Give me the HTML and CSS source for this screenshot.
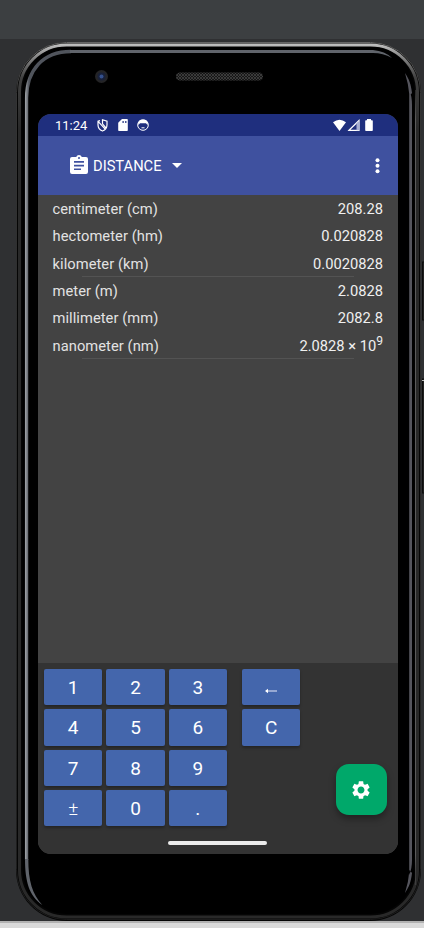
FILE: index.html
```html
<!DOCTYPE html>
<html lang="en">
<head>
<meta charset="utf-8">
<title>Unit converter</title>
<link rel="stylesheet" href="styles.css">
</head>
<body>
<div class="desktop">
  <div class="topbar"></div>
  <div class="bottombar"></div>
  <svg class="frame" width="424" height="928" viewBox="0 0 424 928" fill="none">
    <defs>
      <linearGradient id="edge" x1="0" y1="42" x2="0" y2="921" gradientUnits="userSpaceOnUse">
        <stop offset="0" stop-color="#666"/><stop offset=".06" stop-color="#343434"/><stop offset="1" stop-color="#1c1c1c"/>
      </linearGradient>
      <linearGradient id="shine" x1="0" y1="43" x2="0" y2="130" gradientUnits="userSpaceOnUse">
        <stop offset="0" stop-color="#c4c4c4"/><stop offset=".15" stop-color="#8a8a8a"/><stop offset=".4" stop-color="#404040"/><stop offset="1" stop-color="#292929"/>
      </linearGradient>
      <linearGradient id="rim" x1="25" y1="0" x2="29" y2="0" gradientUnits="userSpaceOnUse">
        <stop offset="0" stop-color="#a2a6aa"/><stop offset="1" stop-color="#50545c"/>
      </linearGradient>
      <linearGradient id="side" x1="0" y1="70" x2="0" y2="905" gradientUnits="userSpaceOnUse">
        <stop offset="0" stop-color="#555" stop-opacity="0"/><stop offset=".06" stop-color="#5c5c5c"/><stop offset=".94" stop-color="#5c5c5c"/><stop offset="1" stop-color="#555" stop-opacity="0"/>
      </linearGradient>
      <pattern id="mesh" width="3" height="3" patternUnits="userSpaceOnUse">
        <rect width="3" height="3" fill="#171717"/><path d="M0 0l3 3M3 0L0 3" stroke="#484848" stroke-width=".7"/>
      </pattern>
    </defs>
    <rect x="422.500" y="262" width="4" height="58" fill="#202020" stroke="#0c0c0c"/>
    <rect x="422.500" y="379" width="4" height="114" fill="#202020" stroke="#0c0c0c"/>
    <path d="M422 380.500h2" stroke="#bbb"/>
    <rect x="16" y="42" width="405" height="879" rx="51" fill="#050505"/>
    <rect x="16.500" y="42.500" width="404" height="877" rx="50" stroke="url(#edge)"/>
    <rect x="19.500" y="45" width="398" height="872" rx="47" stroke="url(#shine)" stroke-width="3"/>
    <rect x="22.500" y="47" width="392" height="867" rx="44" fill="#000"/>
    <path d="M415.500 90v795" stroke="url(#side)"/>
    <path d="M26.600 860V98C26.600 70 43 51.500 71 51.500" stroke="url(#rim)" stroke-width="3.300"/>
    <path d="M70 50h303q12 1 19 8-9-5-19-5H70z" fill="#60646b"/>
    <path d="M25 859h3.300c0 22 4 35 14 46C29 896 25 881 25 859z" fill="#60646b"/>
    <path d="M409.200 90q2.800 6 2.800 15v755q0 9-2.800 15zM405 73c4 6 6 11 7 20l-2.500 3q-1-12-4.500-23zM405 893c4-6 6-11 7-20l-2.500-3q-1 12-4.500 23z" fill="#55555d"/>
    <circle cx="101.500" cy="76.500" r="6.500" fill="#242426"/>
    <circle cx="101.500" cy="76.500" r="4" fill="#182039"/>
    <circle cx="101.500" cy="76.500" r="2" fill="#34508c"/>
    <rect x="176" y="72.500" width="87" height="8" rx="4" fill="url(#mesh)"/>
  </svg>

  <main class="screen">
    <header class="status">
      <span class="time">11:24</span>
      <svg class="s-icon shield" width="11" height="13" viewBox="0 0 11 13" fill="none" stroke="#fff" stroke-width="1.200"><path d="M3 1.600L1 2.300v3.500C1 8.500 2.800 11 5.500 12 8.200 11 10 8.500 10 5.800V2.300L5.500.8v4L9 9M1.500 2.800l6.500 7"/></svg>
      <svg class="s-icon card" width="10" height="12" viewBox="0 0 10 12"><path fill="#fff" fill-rule="evenodd" d="M4 0H9q.8 0 .8.800v10.400q0 .8-.8.800H1q-.8 0-.8-.800V3.800zM4.500 2v2h1.200V2zm2.700 0v2h1.200V2z"/></svg>
      <svg class="s-icon face" width="12" height="12" viewBox="0 0 12 12" fill="none" stroke="#fff"><circle cx="6" cy="6" r="5.300"/><path fill="#fff" stroke="none" d="M1 3.500L1.500 6 3 4.200h6L10.500 6 11 3.500 9 1H3z"/><path d="M4.500 8.800h3"/></svg>
      <svg class="s-icon radio" width="40" height="13" viewBox="0 0 40 13"><path fill="#fff" d="M0 3.300Q6.500-2 13 3.300L6.500 12zM33 1.200h1V0h4v1.200h1q.8 0 .8.700v9.400q0 .7-.8.700h-6q-.8 0-.8-.7V1.900q0-.7.800-.7z"/><path d="M16 11.300L26 1.500v9.800z" fill="none" stroke="#fff" stroke-width="1.200"/><path d="M23.500 4.500v6.800H26V2z" fill="#a8b0d2"/></svg>
    </header>
    <nav class="toolbar">
      <svg width="18" height="20" viewBox="0 0 18 20"><path fill="#fff" fill-rule="evenodd" d="M16 2h-4.200a3 3 0 0 0-5.600 0H2a2 2 0 0 0-2 2v13a2 2 0 0 0 2 2h14a2 2 0 0 0 2-2V4a2 2 0 0 0-2-2zM9 2a1 1 0 1 1 0 2 1 1 0 0 1 0-2zM4 6h10v1.700H4zm0 3.700h10v1.700H4zm0 3.700h7v1.700H4z"/></svg>
      <span class="title">DISTANCE</span>
      <svg class="caret" width="10" height="5" viewBox="0 0 10 5"><path fill="#fff" d="M0 0h10L5 5z"/></svg>
      <svg class="more" width="5" height="16" viewBox="0 0 5 16" fill="#fff"><circle cx="2.500" cy="2.200" r="2"/><circle cx="2.500" cy="7.700" r="2"/><circle cx="2.500" cy="13.200" r="2"/></svg>
    </nav>
    <section class="list">
      <div class="row"><span class="unit">centimeter (cm)</span><span class="value">208.28</span></div>
      <div class="row"><span class="unit">hectometer (hm)</span><span class="value">0.020828</span></div>
      <div class="row ruled"><span class="unit">kilometer (km)</span><span class="value">0.0020828</span></div>
      <div class="row"><span class="unit">meter (m)</span><span class="value">2.0828</span></div>
      <div class="row"><span class="unit">millimeter (mm)</span><span class="value">2082.8</span></div>
      <div class="row ruled"><span class="unit">nanometer (nm)</span><span class="value">2.0828 × 10<sup>9</sup></span></div>
    </section>
    <section class="keypad">
      <div class="keys digits">
        <button>1</button><button>2</button><button>3</button>
        <button>4</button><button>5</button><button>6</button>
        <button>7</button><button>8</button><button>9</button>
        <button class="sign">±</button><button>0</button><button>.</button>
      </div>
      <div class="keys edit">
        <button aria-label="Backspace"><svg width="12" height="6" viewBox="0 0 12 6"><path d="M1 3h11" stroke="#c4cde6" stroke-width="1.300"/><path d="M0 3l3-2.300v4.600z" fill="#fff"/></svg></button>
        <button>C</button>
      </div>
      <button class="fab" aria-label="Settings"><svg width="22" height="22" viewBox="0 0 24 24"><path fill="#fff" d="M19.140 12.940c.040-.300.060-.610.060-.940 0-.320-.020-.640-.070-.940l2.030-1.580c.180-.140.230-.410.120-.610l-1.920-3.320c-.120-.220-.370-.290-.590-.220l-2.390.960c-.500-.380-1.030-.700-1.620-.940l-.360-2.540c-.040-.240-.240-.410-.480-.410h-3.840c-.240 0-.430.170-.470.410l-.360 2.540c-.590.240-1.130.570-1.620.940l-2.390-.960c-.220-.080-.470 0-.590.220L2.740 8.870c-.120.210-.080.470.120.610l2.030 1.580c-.050.300-.090.630-.090.940s.020.640.070.940l-2.030 1.580c-.180.140-.230.410-.120.610l1.920 3.320c.120.220.370.290.590.220l2.390-.960c.500.380 1.030.700 1.620.940l.360 2.540c.050.240.240.410.480.410h3.840c.240 0 .440-.170.470-.410l.360-2.540c.590-.240 1.130-.560 1.620-.940l2.390.960c.220.080.470 0 .590-.220l1.920-3.320c.120-.220.070-.470-.120-.610l-2.010-1.580zM12 15.800c-2.090 0-3.800-1.710-3.800-3.800s1.710-3.800 3.800-3.800 3.800 1.710 3.800 3.800-1.710 3.800-3.800 3.800z"/></svg></button>
      <div class="home"></div>
    </section>
  </main>
</div>
</body>
</html>
```
FILE: styles.css
```css
* { box-sizing: border-box; }
body { margin: 0; font-family: Roboto, sans-serif; color: #fff; }
.desktop { position: relative; display: flex; flex-direction: column; justify-content: space-between; width: 424px; height: 928px; background: #2f3032; overflow: hidden; }
.topbar { height: 39px; background: #3c3f41; }
.bottombar { height: 7px; background: #dadada; border-top: 2px solid #b2b2b2; }
.frame { position: absolute; inset: 0; }
.screen { position: absolute; left: 38px; top: 114px; width: 360px; height: 740px; display: flex; flex-direction: column; border-radius: 13px; overflow: hidden; background: #434343; }
.status { height: 22px; display: flex; align-items: center; padding: 0 25px 0 17px; background: #1f2f7e; }
.time { width: 42px; font-size: 13px; line-height: 22px; padding-top: 1px; }
.s-icon { flex: none; }
.card { margin-left: 10px; }
.face { margin-left: 9px; }
.radio { margin-left: auto; }
.toolbar { height: 59px; display: flex; align-items: center; padding: 0 18px 0 32px; background: #3f519f; }
.toolbar svg:first-child { margin-top: -1px; }
.title { width: 72px; margin-left: 5px; margin-right: 7px; font-size: 14.700px; padding-top: 1px; white-space: nowrap; }
.more { margin-left: auto; }
.list { flex: 1; }
.row { position: relative; display: flex; justify-content: space-between; height: 27.350px; padding: 0 15px; line-height: 28px; font-size: 14.700px; color: #e2e2e2; }
.unit { letter-spacing: .06px; margin-left: -.5px; }
.value { color: #f0f0f0; }
.value sup { font-size: 12px; line-height: 0; vertical-align: 6px; }
.ruled::after { content: ""; position: absolute; left: 44px; right: 44px; bottom: 0; height: 1px; background: #535353; }
.keypad { position: relative; display: flex; gap: 15px; height: 191px; padding: 6px; background: #333; }
.keys { display: grid; gap: 4px; grid-auto-rows: 36.330px; align-content: start; }
.digits { grid-template-columns: repeat(3, 58.330px); }
.edit { grid-template-columns: 58.330px; }
.keys button { display: flex; align-items: center; justify-content: center; border: 0; border-radius: 2px; padding: 1px 0 0; background: #4466ac; color: #fff; font: 19px Roboto, sans-serif; box-shadow: 0 2px 3px rgba(0,0,0,.3); }
.keys button svg { margin-top: 6px; }
.keys .sign { font-weight: 300; }
.fab { position: absolute; left: 298px; top: 101px; width: 51px; height: 51px; display: flex; align-items: center; justify-content: center; border: 0; border-radius: 13px; padding: 0 1px 0 0; background: #00a86a; box-shadow: 0 4px 7px rgba(0,0,0,.35); }
.home { position: absolute; left: 130px; top: 178px; width: 99px; height: 4px; border-radius: 2px; background: #ececec; }
```
